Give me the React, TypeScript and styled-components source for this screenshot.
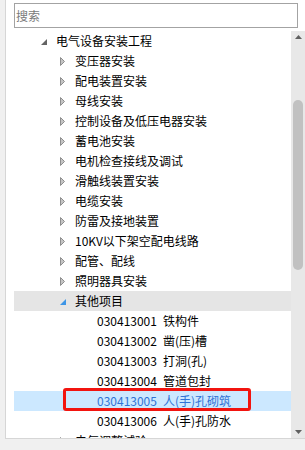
import React from "react";
import styled, { createGlobalStyle } from "styled-components";

const Global = createGlobalStyle`
  html, body { margin: 0; padding: 0; background: #f0f0f0; }
  body { width: 305px; height: 450px; overflow: hidden; font-family: "Noto Sans CJK SC", "Microsoft YaHei", sans-serif; }
`;

const Page = styled.div`
  width: 305px;
  height: 450px;
  background: #f0f0f0;
  display: flex;
  align-items: flex-start;
`;

const Panel = styled.div`
  margin-left: 5px;
  width: 293px;
  height: 438px;
  background: #fff;
  border-left: 1px solid #d6d6d6;
  border-bottom: 1px solid #d6d6d6;
  padding-left: 8px;
  box-sizing: content-box;
  display: flex;
  flex-direction: column;
`;

const Search = styled.div`
  margin-top: 3px;
  width: 284px;
  height: 25px;
  box-sizing: border-box;
  border: 1px solid #a3a3a3;
  display: flex;
  align-items: center;
  padding-left: 1px;
  font-size: 12px;
  color: #7a7a7a;
`;

const TreeArea = styled.div`
  margin-top: 3px;
  flex: 1;
  display: flex;
  min-height: 0;
  overflow: hidden;
`;

const TreeList = styled.div`
  flex: 1;
  overflow: hidden;
  display: flex;
  flex-direction: column;
`;

const Row = styled.div<{ $level: number; $state?: "hover" | "selected" }>`
  position: relative;
  flex: none;
  height: 20px;
  display: flex;
  align-items: center;
  padding-left: ${(p) => 23 + (p.$level - 1) * 19}px;
  font-size: 12px;
  line-height: 20px;
  white-space: nowrap;
  color: ${(p) => (p.$state === "selected" ? "#2f73d6" : "#000")};
  background: ${(p) =>
    p.$state === "hover" ? "#e5e5e5" : p.$state === "selected" ? "#cce8ff" : "transparent"};
`;

const ArrowBox = styled.span`
  width: 16px;
  height: 20px;
  display: flex;
  align-items: center;
  padding-left: 4px;
  box-sizing: border-box;
  margin-right: 3px;
`;

const LeafRow = styled(Row)`
  padding-left: 83px;
`;

const Code = styled.span`
  width: 66px;
  flex: none;
`;

const Mark = styled.div`
  position: absolute;
  left: 49px;
  top: -3px;
  width: 188px;
  height: 23px;
  box-sizing: border-box;
  border: 3px solid #f2140f;
  border-radius: 3px;
  pointer-events: none;
`;

const Scrollbar = styled.div`
  width: 14px;
  flex: none;
  background: #e8e8e8;
  position: relative;
  display: flex;
  flex-direction: column;
  align-items: center;
`;

const ScrollArrow = styled.div`
  height: 12px;
  display: flex;
  align-items: center;
  justify-content: center;
`;

const Thumb = styled.div`
  margin-top: 57px;
  width: 10px;
  height: 170px;
  border-radius: 5px;
  background: #c1c1c1;
`;

const Spacer = styled.div`
  flex: 1;
`;

const Expanded = ({ color }: { color: string }) => (
  <svg width="7" height="7" viewBox="0 0 7 7" style={{ marginTop: 2 }}>
    <polygon points="6,0 6,6 0,6" fill={color} />
  </svg>
);

const Collapsed = () => (
  <svg width="6" height="9" viewBox="0 0 6 9">
    <polygon points="0.5,0.5 4.5,4.5 0.5,8.5" fill="#c4c4c4" stroke="#8e8e8e" strokeWidth="1" />
  </svg>
);

const groups = [
  "变压器安装",
  "配电装置安装",
  "母线安装",
  "控制设备及低压电器安装",
  "蓄电池安装",
  "电机检查接线及调试",
  "滑触线装置安装",
  "电缆安装",
  "防雷及接地装置",
  "10KV以下架空配电线路",
  "配管、配线",
  "照明器具安装",
];

const leaves = [
  ["030413001", "铁构件"],
  ["030413002", "凿(压)槽"],
  ["030413003", "打洞(孔)"],
  ["030413004", "管道包封"],
  ["030413005", "人(手)孔砌筑"],
  ["030413006", "人(手)孔防水"],
];

export default function App() {
  return (
    <Page>
      <Global />
      <Panel>
        <Search>搜索</Search>
        <TreeArea>
          <TreeList>
            <Row $level={1}>
              <ArrowBox>
                <Expanded color="#646464" />
              </ArrowBox>
              电气设备安装工程
            </Row>
            {groups.map((g) => (
              <Row $level={2} key={g}>
                <ArrowBox>
                  <Collapsed />
                </ArrowBox>
                {g}
              </Row>
            ))}
            <Row $level={2} $state="hover">
              <ArrowBox>
                <Expanded color="#3d95e6" />
              </ArrowBox>
              其他项目
            </Row>
            {leaves.map(([c, n]) => (
              <LeafRow $level={3} key={c} $state={c === "030413005" ? "selected" : undefined}>
                <Code>{c}</Code>
                {n}
                {c === "030413005" && <Mark />}
              </LeafRow>
            ))}
            <Row $level={2}>
              <ArrowBox>
                <Collapsed />
              </ArrowBox>
              电气调整试验
            </Row>
          </TreeList>
          <Scrollbar>
            <ScrollArrow>
              <svg width="7" height="4" viewBox="0 0 7 4">
                <polygon points="0,4 3.5,0 7,4" fill="#606060" />
              </svg>
            </ScrollArrow>
            <Thumb />
            <Spacer />
            <ScrollArrow>
              <svg width="7" height="4" viewBox="0 0 7 4">
                <polygon points="0,0 7,0 3.5,4" fill="#606060" />
              </svg>
            </ScrollArrow>
          </Scrollbar>
        </TreeArea>
      </Panel>
    </Page>
  );
}
